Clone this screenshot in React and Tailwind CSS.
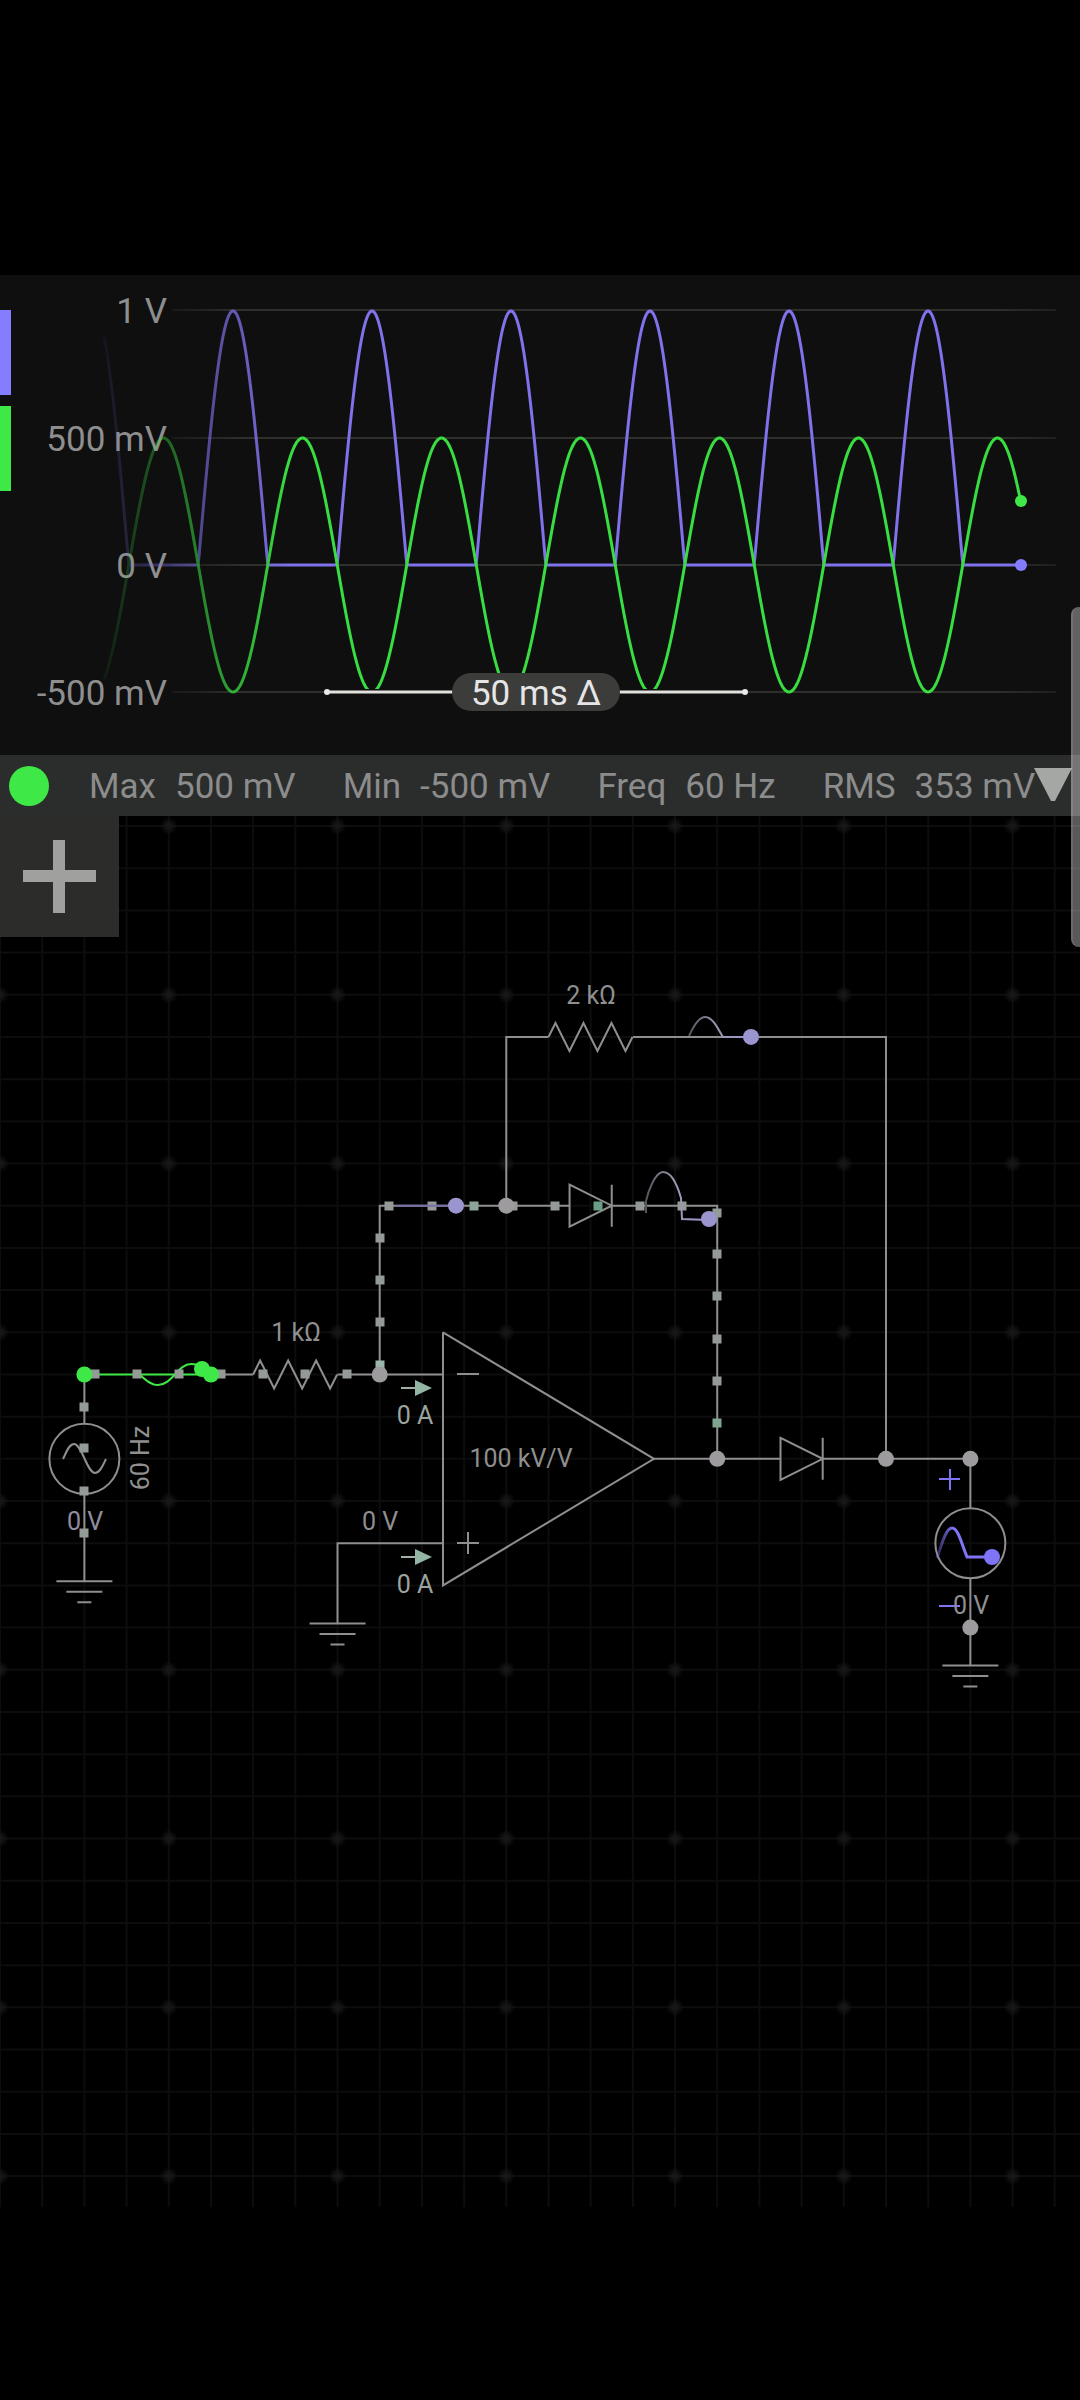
import React from "react";

const GRID = 42.19;
const TOP = 10;

// grid cell -> canvas px
const gx = (i) => i * GRID;
const gy = (j) => TOP + j * GRID;

const WIRE = "#8f8f8f";
const NODE = "#9d9b9d";
const GREEN = "#3ee846";
const PURPLE = "#7f74f5";
const LILAC = "#9a94cf";

const PERIOD = 139;
const LAST_PEAK = 997.5;
const ZERO = 290;
const AMP = 127;

const greenAt = (x) => ZERO - AMP * Math.cos((2 * Math.PI * (x - LAST_PEAK)) / PERIOD);
const purpleAt = (x) =>
  ZERO - Math.max(0, -2 * AMP * Math.cos((2 * Math.PI * (x - LAST_PEAK)) / PERIOD));

const plot = (fn, from, to) => {
  const points = [];
  for (let x = from; x <= to; x += 1) {
    points.push(`${x},${fn(x).toFixed(2)}`);
  }
  return points.join(" ");
};

const levels = [
  { label: "1 V", y: 35 },
  { label: "500 mV", y: 163 },
  { label: "0 V", y: 290 },
  { label: "-500 mV", y: 417 },
];

const stats = [
  { name: "Max", value: "500 mV" },
  { name: "Min", value: "-500 mV" },
  { name: "Freq", value: "60 Hz" },
  { name: "RMS", value: "353 mV" },
];

const Scope = () => (
  <section className="bg-[#0f0f10]">
    <svg viewBox="0 0 1080 480" className="block w-full" role="img" aria-label="Scope">
      <defs>
        <linearGradient id="fade" gradientUnits="userSpaceOnUse" x1="98" y1="0" x2="290" y2="0">
          <stop offset="0" stopColor="#fff" stopOpacity="0.03" />
          <stop offset="0.15" stopColor="#fff" stopOpacity="0.2" />
          <stop offset="0.4" stopColor="#fff" stopOpacity="0.45" />
          <stop offset="1" stopColor="#fff" stopOpacity="1" />
        </linearGradient>
        <mask id="trail" maskUnits="userSpaceOnUse" x="0" y="0" width="1080" height="480">
          <rect width="1080" height="480" fill="url(#fade)" />
        </mask>
        <linearGradient id="rule" gradientUnits="userSpaceOnUse" x1="172" y1="0" x2="1056" y2="0">
          <stop offset="0" stopColor="#2f2f2b" stopOpacity="0.3" />
          <stop offset="0.08" stopColor="#2f2f2b" />
          <stop offset="0.93" stopColor="#2f2f2b" />
          <stop offset="1" stopColor="#2f2f2b" stopOpacity="0.5" />
        </linearGradient>
      </defs>

      <rect x="0" y="35" width="11" height="85" fill="#857dff" />
      <rect x="0" y="131" width="11" height="85" fill={GREEN} />

      {levels.map((level) => (
        <rect key={level.label} x="172" y={level.y - 1} width="884" height="2" fill="url(#rule)" />
      ))}

      {levels.map((level) => (
        <text
          key={level.label}
          x="167"
          y={level.y + 13}
          textAnchor="end"
          fill="#8e8e8e"
          className="font-[Roboto,sans-serif] text-[35px]"
        >
          {level.label}
        </text>
      ))}

      <g mask="url(#trail)" fill="none" strokeWidth="3" strokeLinejoin="round">
        <polyline points={plot(purpleAt, 104, 1021)} stroke="#7f72ea" />
        <polyline points={plot(greenAt, 104, 1021)} stroke="#39dd42" />
      </g>
      <circle cx="1021" cy="290" r="6" fill="#857dff" />
      <circle cx="1021" cy="226" r="6" fill={GREEN} />

      {/* time span */}
      <rect x="327" y="414" width="419" height="7" fill="#0f0f10" />
      <line x1="327" y1="417" x2="746" y2="417" stroke="#e2e2dc" strokeWidth="3" />
      <circle cx="327" cy="417" r="3" fill="#e8e8e8" />
      <circle cx="745" cy="417" r="3" fill="#e8e8e8" />
      <rect x="452" y="398" width="168" height="38" rx="19" fill="#3c3c3b" />
      <text
        x="536"
        y="430"
        textAnchor="middle"
        fill="#e6e6e6"
        className="font-[Roboto,sans-serif] text-[35px]"
      >
        50 ms Δ
      </text>
    </svg>
  </section>
);

const StatsBar = () => (
  <div className="relative flex h-[61px] items-center bg-[#2b2c2c] pl-[9px] text-[35px] leading-none text-[#8c8c8c]">
    <span className="h-10 w-10 shrink-0 rounded-full bg-[#3ee846]" />
    <dl className="ml-10 flex gap-[47px] whitespace-nowrap pt-[2px]">
      {stats.map((stat) => (
        <div key={stat.name} className="flex gap-[19px]">
          <dt>{stat.name}</dt>
          <dd>{stat.value}</dd>
        </div>
      ))}
    </dl>
    <button type="button" aria-label="Collapse scope" className="absolute right-2 top-[13px]">
      <svg viewBox="0 0 38 34" className="h-[34px] w-[38px]">
        <path d="M0 0H38L21 33H17Z" fill="#a5a7a5" />
      </svg>
    </button>
  </div>
);

const Label = ({ x, y, children, fill = "#8f8f8f", rotate }) => (
  <text
    x={x}
    y={y}
    textAnchor="middle"
    fill={fill}
    transform={rotate ? `rotate(-90 ${x} ${y})` : undefined}
    className="font-[Roboto,sans-serif] text-[25px]"
  >
    {children}
  </text>
);

const Wire = ({ points }) => (
  <polyline points={points.map(([i, j]) => `${gx(i)},${gy(j)}`).join(" ")} />
);

const Resistor = ({ i, j }) => {
  const x = gx(i);
  const y = gy(j);
  return (
    <path
      d={`M${x} ${y}l7 -14l14 28l14 -28l14 28l14 -28l14 28l7 -14`}
    />
  );
};

const Diode = ({ i, j }) => {
  const x = gx(i);
  const y = gy(j);
  return <path d={`M${x} ${y - 21}V${y + 21}L${x + GRID} ${y}ZM${x + GRID} ${y - 21}V${y + 21}`} />;
};

const Ground = ({ i, j }) => {
  const x = gx(i);
  const y = gy(j) + 38;
  return <path d={`M${x - 28} ${y}h56M${x - 18} ${y + 10.5}h36M${x - 7} ${y + 21}h14`} />;
};

const Arrow = ({ x, y }) => (
  <g>
    <line x1={x} y1={y} x2={x + 16} y2={y} stroke="#a3b0a8" strokeWidth="2" />
    <path d={`M${x + 14} ${y - 8}L${x + 31} ${y}L${x + 14} ${y + 8}Z`} fill="#93b5a3" />
  </g>
);

const nodes = [
  [9, 13],
  [12, 9],
  [17, 15],
  [21, 15],
  [23, 15],
  [23, 19],
];

const charges = [
  { x: 95, y: 558 }, { x: 137, y: 558 }, { x: 179, y: 558 }, { x: 221, y: 558 },
  { x: 263, y: 558 }, { x: 305, y: 558 }, { x: 347, y: 558 },
  { x: 84, y: 591 }, { x: 84, y: 632 }, { x: 84, y: 675 }, { x: 84, y: 717 },
  { x: 380, y: 549, fill: "#9bb5ac" }, { x: 380, y: 506 }, { x: 380, y: 464 }, { x: 380, y: 422 },
  { x: 389, y: 390 }, { x: 432, y: 390 }, { x: 474, y: 390, fill: "#8ba698" },
  { x: 513, y: 390 }, { x: 555, y: 390 }, { x: 598, y: 390, fill: "#6c9f88" },
  { x: 640, y: 390 }, { x: 682, y: 390 },
  { x: 717, y: 397 }, { x: 717, y: 438 }, { x: 717, y: 480 }, { x: 717, y: 523 },
  { x: 717, y: 565 }, { x: 717, y: 607, fill: "#7fa591" },
];

const Circuit = () => (
  <svg viewBox="0 0 1080 1584" className="block w-full" role="img" aria-label="Circuit">
    <defs>
      <linearGradient id="pulse" x1="0" y1="0" x2="1" y2="0">
        <stop offset="0" stopColor="#55555c" />
        <stop offset="0.45" stopColor="#9c98b0" />
        <stop offset="1" stopColor={LILAC} />
      </linearGradient>
      <linearGradient id="probe" x1="0" y1="0" x2="1" y2="0">
        <stop offset="0" stopColor={PURPLE} stopOpacity="0.3" />
        <stop offset="0.3" stopColor={PURPLE} />
      </linearGradient>
      <radialGradient id="dot">
        <stop offset="0.2" stopColor="#171717" />
        <stop offset="1" stopColor="#171717" stopOpacity="0" />
      </radialGradient>
    </defs>

    {/* grid */}
    <g stroke="#0d0d0d" strokeWidth="2">
      {Array.from({ length: 26 }, (_, i) => (
        <line key={i} x1={gx(i)} y1="0" x2={gx(i)} y2="1391" />
      ))}
      {Array.from({ length: 33 }, (_, j) => (
        <line key={j} x1="0" y1={gy(j)} x2="1080" y2={gy(j)} />
      ))}
    </g>
    {Array.from({ length: 63 }, (_, n) => (
      <circle key={n} cx={gx((n % 7) * 4)} cy={gy(Math.floor(n / 7) * 4)} r="9" fill="url(#dot)" />
    ))}

    <g stroke={WIRE} strokeWidth="2" fill="none">
      <Wire points={[[5, 13], [6, 13]]} />
      <Wire points={[[8, 13], [10.5, 13]]} />
      <Wire points={[[9, 13], [9, 9], [13.5, 9]]} />
      <Wire points={[[12, 9], [12, 5], [13, 5]]} />
      <Wire points={[[15, 5], [21, 5], [21, 15]]} />
      <Wire points={[[14.5, 9], [17, 9], [17, 15]]} />
      <Wire points={[[15.5, 15], [18.5, 15]]} />
      <Wire points={[[19.5, 15], [23, 15]]} />
      <Wire points={[[10.5, 12], [10.5, 18], [15.5, 15], [10.5, 12]]} />
      <path d={`M${gx(10.5)} ${gy(17)}H${gx(8)}V${gy(18) + 38}`} />
      <path d={`M${gx(2)} ${gy(13)}V${gy(15) - 35}M${gx(2)} ${gy(15) + 35}V${gy(17) + 38}`} />
      <path d={`M${gx(23)} ${gy(15)}V${gy(17) - 35}M${gx(23)} ${gy(17) + 35}V${gy(19) + 38}`} />
      <circle cx={gx(2)} cy={gy(15)} r="35" />
      <circle cx={gx(23)} cy={gy(17)} r="35" />
      <path d="M63 643C66 637 69 628 74 628C82 628 87 657 95 657C100 657 103 649 106 643" />
      <Resistor i={6} j={13} />
      <Resistor i={13} j={5} />
      <Diode i={13.5} j={9} />
      <Diode i={18.5} j={15} />
      <Ground i={2} j={17} />
      <Ground i={8} j={18} />
      <Ground i={23} j={19} />
      <path d="M457 558h22M457 727h22M468 716v22" />
    </g>

    {/* green probe */}
    <g stroke={GREEN} fill="none">
      <line x1={gx(2)} y1={gy(13)} x2={gx(5)} y2={gy(13)} strokeWidth="2" />
      <path d="M140 559C145 563 150 569 158 569C172 569 178 548 191 548C196 548 199 549 203 553" strokeWidth="2" />
    </g>

    {charges.map((charge, index) => (
      <rect
        key={index}
        x={charge.x - 4.5}
        y={charge.y - 4.5}
        width="9"
        height="9"
        fill={charge.fill || "#949a95"}
      />
    ))}

    {nodes.map(([i, j]) => (
      <circle key={`${i}-${j}`} cx={gx(i)} cy={gy(j)} r="8" fill={NODE} />
    ))}

    <g fill={GREEN}>
      <circle cx={gx(2)} cy={gy(13)} r="8" />
      <circle cx="202" cy="553" r="8" />
      <circle cx="211" cy={gy(13)} r="8" />
    </g>

    {/* voltage traces on the wires */}
    <line x1="396" y1={gy(9)} x2="456" y2={gy(9)} stroke="#7771a8" strokeWidth="2" />
    <g fill="none" stroke="url(#pulse)" strokeWidth="2">
      <path d="M689 220C694 209 699 201 705 201C713 201 718 213 723 221H751" />
      <path d="M646 397V385C648 376 655 356 663 356C671 356 677 368 681 382L682 403L708 404" />
    </g>
    <g fill={LILAC}>
      <circle cx="456" cy={gy(9)} r="8" />
      <circle cx="751" cy={gy(5)} r="8" />
      <circle cx="709" cy="403" r="8" />
    </g>

    <path d="M937 742C942 727 946 712 952 712C958 712 961 726 967 741H992" fill="none" stroke="url(#probe)" strokeWidth="3" />
    <circle cx="992" cy="741" r="8" fill={PURPLE} />
    <path d="M939 663h21M950 653v21M939 790h21" stroke={PURPLE} strokeWidth="2" />

    <Arrow x={401} y={572} />
    <Arrow x={401} y={741} />

    <Label x={591} y={188}>2 kΩ</Label>
    <Label x={296} y={525}>1 kΩ</Label>
    <Label x={521} y={651}>100 kV/V</Label>
    <Label x={415} y={608} fill="#9ba49d">0 A</Label>
    <Label x={415} y={777} fill="#9ba49d">0 A</Label>
    <Label x={380} y={714}>0 V</Label>
    <Label x={85} y={714} fill="#8f8da0">0 V</Label>
    <Label x={971} y={798}>0 V</Label>
    <Label x={149} y={642} rotate>60 Hz</Label>
  </svg>
);

const App = () => {
  return (
    <main className="relative min-h-screen overflow-hidden bg-black pt-[275px] font-[Roboto,sans-serif]">
      <Scope />
      <StatsBar />
      <section className="relative">
        <Circuit />
        <button
          type="button"
          aria-label="Add component"
          className="absolute left-0 top-0 flex h-[121px] w-[119px] items-center justify-center bg-[#2c2d2b]"
        >
          <svg viewBox="0 0 73 73" className="h-[73px] w-[73px]">
            <path d="M30 0H42V30H73V42H42V73H30V42H0V30H30Z" fill="#a0a09e" />
          </svg>
        </button>
      </section>
      <div className="absolute right-0 top-[607px] h-[340px] w-[9px] rounded-l-lg border-l-2 border-white/10 bg-white/35" />
    </main>
  );
};

export default App;
